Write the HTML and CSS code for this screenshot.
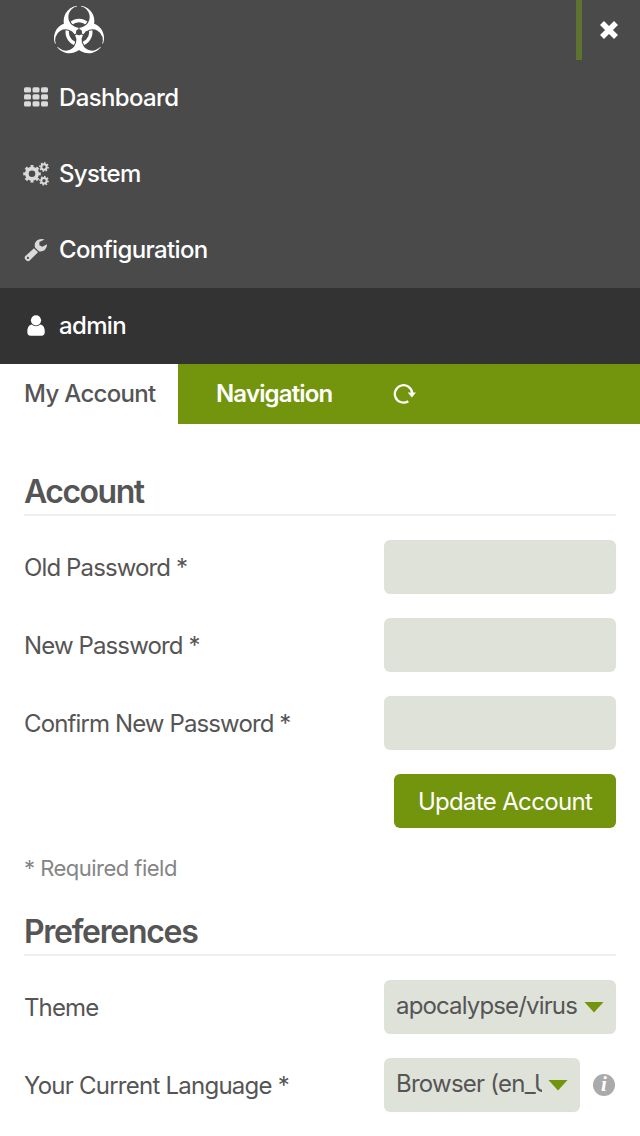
FILE: index.html
```
<!DOCTYPE html>
<html lang="en">
<head>
<meta charset="utf-8">
<title>My Account</title>
<link rel="stylesheet" href="styles.css">
</head>
<body>
<header class="menu">
  <div class="topbar">
    <svg class="logo" viewBox="0 0 240 180" aria-label="Logo">
      <defs>
        <mask id="lobes" maskUnits="userSpaceOnUse" x="0" y="0" width="240" height="192">
          <g fill="#fff"><circle cx="117" cy="63.5" r="46"/><circle cx="117" cy="63.5" r="46" transform="rotate(120 117 97)"/><circle cx="117" cy="63.5" r="46" transform="rotate(240 117 97)"/></g>
          <g fill="#000"><circle cx="117" cy="51" r="32"/><circle cx="117" cy="51" r="32" transform="rotate(120 117 97)"/><circle cx="117" cy="51" r="32" transform="rotate(240 117 97)"/><circle cx="117" cy="97" r="9"/></g>
          <g stroke="#000"><path d="M117 90V76" stroke-width="3"/><path d="M117 30V10" stroke-width="12"/></g>
          <g stroke="#000" transform="rotate(120 117 97)"><path d="M117 90V76" stroke-width="3"/><path d="M117 30V10" stroke-width="12"/></g>
          <g stroke="#000" transform="rotate(240 117 97)"><path d="M117 90V76" stroke-width="3"/><path d="M117 30V10" stroke-width="12"/></g>
        </mask>
        <clipPath id="gaps"><circle cx="117" cy="51" r="29"/><circle cx="117" cy="51" r="29" transform="rotate(120 117 97)"/><circle cx="117" cy="51" r="29" transform="rotate(240 117 97)"/></clipPath>
      </defs>
      <rect width="240" height="192" fill="#fff" mask="url(#lobes)"/>
      <circle cx="117" cy="97" r="35.5" fill="none" stroke="#fff" stroke-width="10" clip-path="url(#gaps)"/>
    </svg>
    <button class="close" aria-label="Close"><svg width="20" height="20" viewBox="0 0 20 20"><path d="M3 3l14 14M17 3L3 17" stroke="#fff" stroke-width="5.6"/></svg></button>
  </div>
  <nav>
    <a class="item"><svg class="icon" viewBox="0 0 26 26" fill="#dadada"><rect x="1" y="2.2" width="7" height="5.4" rx="1.5"/><rect x="9.5" y="2.2" width="7" height="5.4" rx="1.5"/><rect x="18" y="2.2" width="7" height="5.4" rx="1.5"/><rect x="1" y="9.2" width="7" height="5.4" rx="1.5"/><rect x="9.5" y="9.2" width="7" height="5.4" rx="1.5"/><rect x="18" y="9.2" width="7" height="5.4" rx="1.5"/><rect x="1" y="16.2" width="7" height="5.4" rx="1.5"/><rect x="9.5" y="16.2" width="7" height="5.4" rx="1.5"/><rect x="18" y="16.2" width="7" height="5.4" rx="1.5"/></svg><span class="t-dash">Dashboard</span></a>
    <a class="item"><svg class="icon" viewBox="0 0 26 26" fill="none" stroke="#dadada"><circle cx="9" cy="12.8" r="5.2" stroke-width="3.8"/><circle cx="9" cy="12.8" r="7.6" stroke-width="2.4" pathLength="16" stroke-dasharray="1 1" stroke-dashoffset=".5"/><circle cx="21" cy="6" r="2.7" stroke-width="2"/><circle cx="21" cy="6" r="4.1" stroke-width="1.6" pathLength="16" stroke-dasharray="1 1"/><circle cx="21" cy="19.7" r="2.7" stroke-width="2"/><circle cx="21" cy="19.7" r="4.1" stroke-width="1.6" pathLength="16" stroke-dasharray="1 1"/></svg><span class="t-sys">System</span></a>
    <a class="item"><svg class="icon" viewBox="0 0 26 26" fill="#dadada"><path fill-rule="evenodd" d="M11 11.2l4 4-8.3 8.3q-1.7 1.3-3.3 0l-1.2-1.2q-1.2-1.6.2-3.2zM4.9 19.8a1.1 1.1 0 1 0 .1 2.2 1.1 1.1 0 0 0-.1-2.2z"/><path d="M21.6 2.4Q18.2 1.1 14.6 3.1 10.7 6 12 10.4L15.8 14.2Q19.2 14.9 21.8 12.9 24.2 10.8 24 7.2L19.3 9.8 16.4 8.2V5z"/></svg><span class="t-conf">Configuration</span></a>
    <a class="item active"><svg class="icon" viewBox="0 0 26 26" fill="#fff"><circle cx="13" cy="7.3" r="5.1"/><path d="M8.6 11.4Q4.3 12.2 4.3 18.8 4.3 22.8 7.6 22.8H18.4Q21.8 22.8 21.8 18.8 21.8 12.2 17.4 11.4 13 15 8.6 11.4z"/></svg><span class="t-admin">admin</span></a>
  </nav>
</header>
<div class="tabs">
  <a class="tab current"><span class="t-my">My Account</span></a>
  <a class="tab nav"><span class="t-nav">Navigation</span></a>
  <a class="refresh" aria-label="Refresh"><svg width="24" height="24" viewBox="0 0 24 24"><path d="M15.3 19.2A8.7 8.7 0 1 1 19.2 11" fill="none" stroke="#fff" stroke-width="2.3"/><path d="M14.7 10.5h8.2l-4 5z" fill="#fff"/></svg></a>
</div>
<main>
  <h2><span class="t-account">Account</span></h2>
  <div class="row"><label><span class="t-old">Old Password *</span></label><input type="password" class="field"></div>
  <div class="row"><label><span class="t-new">New Password *</span></label><input type="password" class="field"></div>
  <div class="row"><label><span class="t-confirm">Confirm New Password *</span></label><input type="password" class="field"></div>
  <div class="row end"><button class="submit"><span class="t-update">Update Account</span></button></div>
  <p class="required"><span class="t-req">* Required field</span></p>
  <h2><span class="t-pref">Preferences</span></h2>
  <div class="row"><label><span class="t-theme">Theme</span></label><div class="field select"><span class="value t-virus">apocalypse/virus</span><i class="arrow"></i></div></div>
  <div class="row"><label><span class="t-lang">Your Current Language *</span></label><div class="field select short"><span class="value t-browser">Browser (en_US)</span><i class="arrow"></i></div><span class="info">i</span></div>
</main>
</body>
</html>
```
FILE: styles.css
```
* { box-sizing: border-box; }
body { margin: 0; width: 640px; height: 1136px; overflow: hidden; background: #fff; color: #555; font: 430 24px/36px Inter, "Liberation Sans", sans-serif; }
.menu { background: #4a4a4a; color: #fff; }
.topbar { height: 60px; display: flex; justify-content: space-between; }
.logo { width: 80px; height: 60px; margin-left: 40px; }
.close { width: 64px; border: 0; border-left: 6px solid #5e7330; background: none; padding: 0 4px 0 0; display: grid; place-items: center; }
.item { height: 76px; display: flex; align-items: center; padding-left: 23px; gap: 10px; font-weight: 550; }
.icon { width: 26px; height: 26px; }
.active { background: #333; }
.tabs { height: 60px; background: #73940d; color: #fff; display: flex; align-items: center; }
.tab { height: 60px; line-height: 60px; }
.current { width: 178px; padding-left: 24px; background: #fff; color: #555; font-weight: 450; }
.nav { padding-left: 38px; width: 215px; font-weight: 600; }
.refresh { height: 24px; line-height: 0; }
main { padding: 46px 24px 0; display: flow-root; }
h2 { margin: 0 0 24px; height: 46px; border-bottom: 2px solid #eee; font-size: 32px; line-height: 43px; font-weight: 600; }
.row { display: flex; height: 54px; margin-bottom: 24px; align-items: center; }
label { width: 360px; padding-top: 2px; white-space: nowrap; }
.field { width: 232px; height: 54px; background: #dfe2d9; border: 0; border-radius: 6px; }
.end { justify-content: flex-end; }
.submit { width: 222px; height: 54px; border: 0; border-radius: 6px; background: #73940d; color: #fff; font: inherit; padding: 2px 0 0; white-space: nowrap; }
.required { margin: 0 0 26px; height: 32px; font-size: 22px; line-height: 32px; color: #858585; }
.select { display: flex; padding: 0 12px; gap: 6px; align-items: center; }
.value { flex: 1; min-width: 0; padding-bottom: 2px; overflow: hidden; white-space: nowrap; }
.arrow { width: 20px; height: 11px; background: #73940d; clip-path: polygon(0 0, 100% 0, 50% 100%); }
.short { width: 196px; }
.info { width: 22px; height: 22px; margin-left: 13px; border-radius: 50%; background: #aaa; color: #fff; text-align: center; font: italic bold 21px/21px "Liberation Serif", serif; }
.t-dash, .t-sys, .t-conf, .t-admin { letter-spacing: -.65px; }
.t-nav { letter-spacing: -.85px; }
.t-my, .t-update { letter-spacing: -.68px; }
.t-old, .t-new, .t-confirm, .t-theme { letter-spacing: -.88px; }
.t-lang, .t-browser { letter-spacing: -.76px; }
.t-virus { letter-spacing: -.85px; }
.t-req { letter-spacing: -.52px; }
.t-account { letter-spacing: -1.5px; }
.t-pref { letter-spacing: -1.3px; }
```
